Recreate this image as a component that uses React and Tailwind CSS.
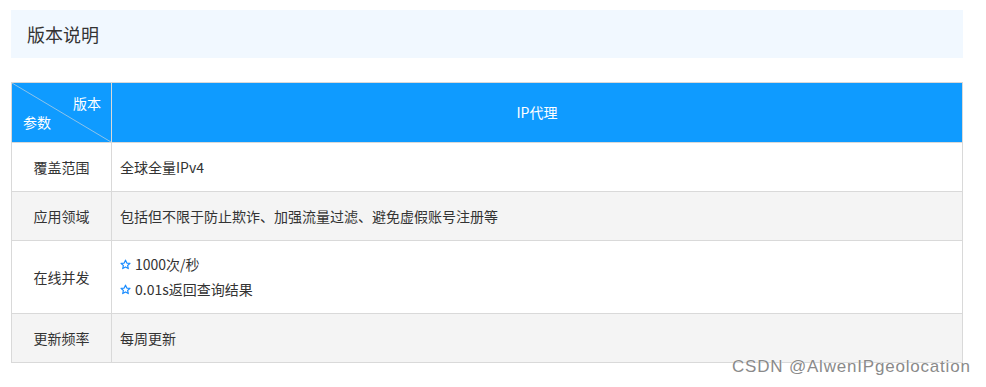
import React from "react";

const font = { fontFamily: '"Noto Sans CJK SC", "Noto Sans", sans-serif' };

function Star() {
  return (
    <svg width="11" height="11" viewBox="0 0 24 24" className="shrink-0 mr-[4px]" fill="none" stroke="#1a8cff" strokeWidth="2.6" strokeLinejoin="round">
      <path d="M12 2.5l2.9 6.3 6.9.7-5.2 4.6 1.5 6.8L12 17.4 5.9 20.9l1.5-6.8L2.2 9.5l6.9-.7z" />
    </svg>
  );
}

const rows = [
  { label: "覆盖范围", h: "h-[49px]", bg: "bg-white", content: <span>全球全量IPv4</span> },
  { label: "应用领域", h: "h-[49px]", bg: "bg-[#f4f4f4]", content: <span>包括但不限于防止欺诈、加强流量过滤、避免虚假账号注册等</span> },
  {
    label: "在线并发",
    h: "h-[73px]",
    bg: "bg-white",
    content: (
      <div className="flex flex-col leading-[25px]">
        <div className="flex items-center"><Star />1000次/秒</div>
        <div className="flex items-center"><Star />0.01s返回查询结果</div>
      </div>
    ),
  },
  { label: "更新频率", h: "h-[49px]", bg: "bg-[#f4f4f4]", content: <span>每周更新</span> },
];

export default function App() {
  return (
    <div className="relative w-[986px] h-[387px] bg-white text-[#333]" style={font}>
      <div className="pl-[11px] pt-[10px] w-[963px]">
        <div className="h-[48px] bg-[#f1f8ff] flex items-center pl-[16px] text-[18px] text-[#333]">
          版本说明
        </div>
        <div className="mt-[24px] w-[952px] border-t border-l border-r border-[#d9d9d9] text-[14px]">
          <div className="flex h-[60px] bg-[#0f9bff] border-b border-[#d9d9d9] text-white">
            <div className="relative w-[100px] shrink-0 border-r border-[#d9d9d9] flex flex-col justify-center leading-[19px]">
              <svg className="absolute inset-0" width="99" height="59" viewBox="0 0 99 59">
                <line x1="0" y1="0" x2="99" y2="59" stroke="#8fc3e8" strokeWidth="1" />
              </svg>
              <div className="relative text-right pr-[10px]">版本</div>
              <div className="relative pl-[11px]">参数</div>
            </div>
            <div className="flex-1 flex items-center justify-center">IP代理</div>
          </div>
          {rows.map((r) => (
            <div key={r.label} className={`flex ${r.h} ${r.bg} border-b border-[#d9d9d9]`}>
              <div className="w-[100px] shrink-0 border-r border-[#d9d9d9] flex items-center justify-center">
                {r.label}
              </div>
              <div className="flex-1 flex items-center pl-[8px]">{r.content}</div>
            </div>
          ))}
        </div>
      </div>
      <div
        className="absolute left-[732px] top-[357px] text-[17px] tracking-[0.8px] text-[#8a8a8a] leading-[20px]"
        style={{ fontFamily: '"Liberation Sans", Arial, sans-serif', textShadow: "0 0 1px #fff, 0 0 1px #fff" }}
      >
        CSDN @AlwenIPgeolocation
      </div>
    </div>
  );
}
